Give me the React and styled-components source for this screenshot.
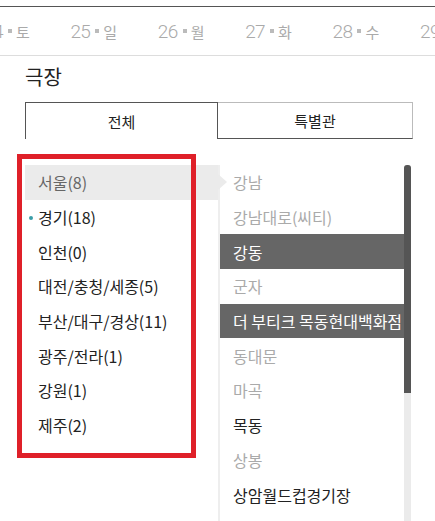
import React from 'react';
import styled, { createGlobalStyle } from 'styled-components';

const GlobalStyle = createGlobalStyle`
  body {
    margin: 0;
    background: #fff;
    font-family: "Noto Sans CJK KR", "Noto Sans", sans-serif;
  }
`;

const dates = [
	{ num: 24, day: '토' },
	{ num: 25, day: '일' },
	{ num: 26, day: '월' },
	{ num: 27, day: '화' },
	{ num: 28, day: '수' },
	{ num: 29, day: '목' },
];

const regions = [
	{ name: '서울(8)', selected: true },
	{ name: '경기(18)', marked: true },
	{ name: '인천(0)' },
	{ name: '대전/충청/세종(5)' },
	{ name: '부산/대구/경상(11)' },
	{ name: '광주/전라(1)' },
	{ name: '강원(1)' },
	{ name: '제주(2)' },
];

const theaters = [
	{ name: '강남', state: 'off' },
	{ name: '강남대로(씨티)', state: 'off' },
	{ name: '강동', state: 'selected' },
	{ name: '군자', state: 'off' },
	{ name: '더 부티크 목동현대백화점', state: 'selected' },
	{ name: '동대문', state: 'off' },
	{ name: '마곡', state: 'off' },
	{ name: '목동', state: 'on' },
	{ name: '상봉', state: 'off' },
	{ name: '상암월드컵경기장', state: 'on' },
	{ name: '성수', state: 'on' },
];

export default function App() {
	return (
		<Page>
			<GlobalStyle />
			<DateBar>
				<DateTrack>
					{dates.map((d) => (
						<DateItem key={d.num}>
							<DateNum>{d.num}</DateNum>
							<DateDot />
							<DateDay>{d.day}</DateDay>
						</DateItem>
					))}
				</DateTrack>
			</DateBar>

			<Section>
				<Title>극장</Title>
				<Tabs>
					<Tab active>전체</Tab>
					<Tab>특별관</Tab>
				</Tabs>

				<Lists>
					<RegionList>
						<Highlight />
						{regions.map((r) => (
							<RegionItem key={r.name} selected={r.selected} marked={r.marked}>
								{r.name}
							</RegionItem>
						))}
					</RegionList>

					<TheaterPanel>
						<TheaterList>
							{theaters.map((t) => (
								<TheaterItem key={t.name} state={t.state}>
									{t.name}
								</TheaterItem>
							))}
						</TheaterList>
						<ScrollTrack>
							<ScrollThumb />
						</ScrollTrack>
					</TheaterPanel>
				</Lists>
			</Section>
		</Page>
	);
}

const Page = styled.div`
  width: 435px;
  height: 521px;
  overflow: hidden;
  padding-top: 6px;
  box-sizing: border-box;
`;

const DateBar = styled.div`
  height: 48px;
  border-top: 1px solid #555;
  border-bottom: 1px solid #ddd;
  overflow: hidden;
  display: flex;
  align-items: center;
`;

const DateTrack = styled.div`
  display: flex;
  align-items: center;
  margin-left: -17px;
`;

const DateItem = styled.div`
  flex: 0 0 87.4px;
  display: flex;
  align-items: center;
  color: #aaa;
`;

const DateNum = styled.span`
  font-family: Roboto, "Liberation Sans", sans-serif;
  font-weight: 300;
  font-size: 19px;
  letter-spacing: -0.6px;
`;

const DateDot = styled.span`
  width: 4px;
  height: 4px;
  background: #bbb;
  margin: 0 4px 0 5px;
`;

const DateDay = styled.span`
  font-size: 15px;
`;

const Section = styled.div`
  padding: 0 22px 0 25px;
`;

const Title = styled.h2`
  margin: 8px 0 0;
  font-size: 20px;
  line-height: 26px;
  font-weight: 400;
  color: #222;
`;

const Tabs = styled.div`
  display: grid;
  grid-template-columns: 193px 195px;
  margin-top: 12px;
`;

const Tab = styled.div`
  height: 37px;
  box-sizing: border-box;
  display: flex;
  align-items: center;
  justify-content: center;
  font-size: 15px;
  color: #222;
  border: 1px solid ${(p) => (p.active ? '#555' : '#bbb')};
  border-bottom: ${(p) => (p.active ? 'none' : '1px solid #555')};
  border-left: ${(p) => (p.active ? '1px solid #555' : 'none')};
`;

const Lists = styled.div`
  display: flex;
  margin-top: 26px;
`;

const RegionList = styled.ul`
  position: relative;
  list-style: none;
  margin: 0;
  padding: 0;
  width: 193px;
`;

const Highlight = styled.li`
  position: absolute;
  left: -8px;
  top: -11px;
  width: 179px;
  height: 304px;
  box-sizing: border-box;
  border: 5px solid #df2029;
  pointer-events: none;
  z-index: 2;
`;

const RegionItem = styled.li`
  position: relative;
  height: 34.7px;
  display: flex;
  align-items: center;
  padding-left: 13px;
  font-size: 16px;
  color: ${(p) => (p.selected ? '#666' : '#222')};
  background: ${(p) => (p.selected ? '#ebebeb' : 'transparent')};

  &::before {
    content: '';
    display: ${(p) => (p.marked ? 'block' : 'none')};
    position: absolute;
    left: 4px;
    top: 50%;
    width: 4px;
    height: 4px;
    margin-top: -1px;
    border-radius: 50%;
    background: #3a9ea8;
  }

  &::after {
    content: '';
    display: ${(p) => (p.selected ? 'block' : 'none')};
    position: absolute;
    right: -9px;
    top: 50%;
    margin-top: -8px;
    border-style: solid;
    border-width: 8px 0 8px 9px;
    border-color: transparent transparent transparent #ebebeb;
  }
`;

const TheaterPanel = styled.div`
  display: flex;
  width: 193px;
  border-left: 2px solid #eee;
  box-sizing: border-box;
`;

const TheaterList = styled.ul`
  list-style: none;
  margin: 0;
  padding: 0;
  flex: 1;
`;

const TheaterItem = styled.li`
  height: 34.7px;
  display: flex;
  align-items: center;
  padding-left: 13px;
  font-size: 16px;
  white-space: nowrap;
  color: ${(p) => (p.state === 'selected' ? '#fff' : p.state === 'on' ? '#222' : '#aaa')};
  background: ${(p) => (p.state === 'selected' ? '#666' : 'transparent')};
`;

const ScrollTrack = styled.div`
  width: 7px;
  background: #ebebeb;
  border-radius: 3px 3px 0 0;
`;

const ScrollThumb = styled.div`
  height: 228px;
  background: #555;
  border-radius: 3px 3px 0 0;
`;
